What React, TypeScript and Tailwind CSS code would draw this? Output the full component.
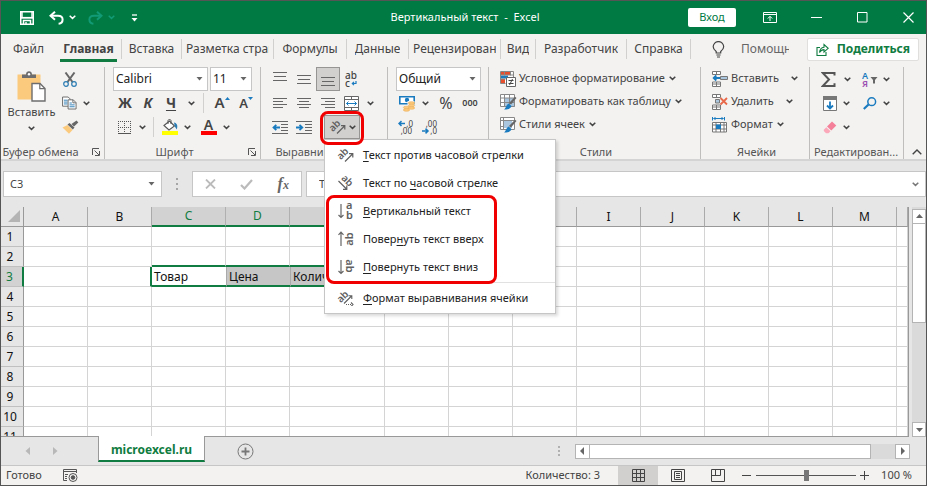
import React, { useState } from "react";

interface IconProps {
  className?: string;
}

const Chevron: React.FC<IconProps> = ({ className = "text-[#444]" }) => (
  <svg width="7" height="5" viewBox="0 0 7 5" fill="none" stroke="currentColor" strokeWidth="1.5" className={`shrink-0 ${className}`}>
    <path d="M0.7 0.8L3.5 3.4L6.3 0.8" />
  </svg>
);

const Caret: React.FC<IconProps> = ({ className = "" }) => (
  <svg width="7" height="4" viewBox="0 0 7 4" fill="#666" className={`shrink-0 ${className}`}>
    <path d="M0.5 0h6L3.5 3.5z" />
  </svg>
);

const SaveIcon = () => (
  <svg width="14" height="14" viewBox="0 0 14 14" fill="none" stroke="#fff" strokeWidth="1.5">
    <path d="M0.75 0.75h12.5v12.5h-12.5z" />
    <path d="M0.75 6.8h12.5" strokeWidth="1.8" />
    <path d="M2 0.8v5.5M12 0.8v5.5" strokeWidth="1.4" />
    <path d="M3.5 13V9.6h7V13" />
    <path d="M6 11v2.5" strokeWidth="1.4" />
  </svg>
);

const UndoIcon: React.FC<IconProps> = ({ className = "" }) => (
  <svg width="15" height="14" viewBox="0 0 15 14" fill="none" stroke="currentColor" strokeWidth="2" className={className}>
    <path d="M6 0.8L1.5 4.8L6 8.8" />
    <path d="M2 4.8H9c2.8 0 4.6 1.5 4.6 3.8S11.8 12.6 9.6 12.8" />
  </svg>
);

const QuickAccessIcon = () => (
  <svg width="7" height="8" viewBox="0 0 7 8">
    <path d="M1 1h5" stroke="#fff" strokeWidth="1.3" />
    <path d="M0.5 4h6L3.5 7.5z" fill="#fff" />
  </svg>
);

const RibbonDisplayIcon = () => (
  <svg width="14" height="11" viewBox="0 0 14 11" fill="none" stroke="#fff">
    <path d="M0.5 0.5h13v10h-13zM0.5 2.5h13" />
    <path d="M7 9V4.5M4.8 6.5L7 4.3L9.2 6.5" />
  </svg>
);

const BulbIcon = () => (
  <svg width="13" height="17" viewBox="0 0 13 17" fill="none" stroke="#444" strokeWidth="1.2">
    <path d="M4.2 12V10.5C2.6 9.3 1.2 8 1.2 5.8a5.2 5.2 0 0 1 10.5 0c0 2.2-1.5 3.5-3 4.7V12zM4.4 14h4.2M5 16h3" />
  </svg>
);

const ShareIcon = () => (
  <svg width="13" height="13" viewBox="0 0 13 13" fill="none" stroke="#107c41" strokeWidth="1.1">
    <path d="M4 4.5H1v8h9V9" />
    <path d="M3.5 9.5C3.8 6 5.5 4.4 8 4.2V1.5L12.2 5.3L8 9V6.6C6 6.6 4.6 7.5 3.5 9.5z" />
  </svg>
);

const PasteIcon = () => (
  <svg width="29" height="31" viewBox="0 0 29 31">
    <path d="M0.5 3.5h23v25h-23z" fill="#fcca7c" />
    <path d="M5 7V3.5h4C9 1.5 10.3 0.3 12 0.3S15 1.5 15 3.5h4V7z" fill="#6d6d6d" />
    <circle cx="12" cy="3.2" r="1.2" fill="#fff" />
    <path d="M15 12.5h8l5 5v12.5h-13z" fill="#fff" stroke="#6d6d6d" strokeWidth="1.4" />
    <path d="M22.8 12.5v5.2H28" fill="none" stroke="#6d6d6d" strokeWidth="1.2" />
  </svg>
);

const CutIcon = () => (
  <svg width="14" height="15" viewBox="0 0 14 15" fill="none">
    <path d="M2.5 0.5L9.5 10M11.5 0.5L4.5 10" stroke="#666" strokeWidth="2" />
    <circle cx="3" cy="12" r="2.3" stroke="#2b7cb3" strokeWidth="1.2" />
    <circle cx="11" cy="12" r="2.3" stroke="#2b7cb3" strokeWidth="1.2" />
  </svg>
);

const CopyIcon = () => (
  <svg width="16" height="14" viewBox="0 0 16 14" fill="#fff">
    <path d="M0.6 0.6h6l2 2v7.8h-8z" stroke="#666" />
    <path d="M2 4h4M2 6h4M2 8h4" stroke="#2b7cb3" />
    <path d="M6.5 3.6h5.5l3 3v6.8h-8.5z" stroke="#666" />
    <path d="M11.6 3.6v3.2h3.2" stroke="#666" fill="none" />
    <path d="M8 7h2.5M8 9h5.5M8 11h5.5" stroke="#2b7cb3" />
  </svg>
);

const BrushIcon = () => (
  <svg width="17" height="14" viewBox="0 0 17 14">
    <path d="M0.5 7.5L5.5 5L10.5 10L7 13.8z" fill="#fcca7c" />
    <path d="M5.5 4.5L7.5 3L12.5 7.5L10.8 9.6z" fill="#666" />
    <path d="M9.5 4L14.5 0.5L16.3 2.5L12 6.5z" fill="#666" />
  </svg>
);

const BordersIcon = () => (
  <svg width="13" height="13" viewBox="0 0 13 13" shapeRendering="crispEdges" fill="none" stroke="#555">
    <path d="M0 0.5h13M0 6.5h13M0.5 0v12M6.5 0v12M12.5 0v12" strokeDasharray="1 1" />
    <path d="M0 12.5h13" />
  </svg>
);

const FillIcon = () => (
  <svg width="16" height="16" viewBox="0 0 16 16">
    <path d="M2 6.5L7.5 2L12.5 7L7 11z" fill="#fff" stroke="#555" strokeWidth="1.1" />
    <path d="M6 5V1.5a1.6 1.6 0 0 1 3 0V5" fill="none" stroke="#555" />
    <path d="M12 3.5c3 .5 4 3 2.8 7l-2-3z" fill="#2b7cb3" />
    <path d="M0 12h16v4H0z" fill="#ff0" />
  </svg>
);

interface LinesProps {
  rows: [number, number, number][];
}

// каждая строка: x, y, ширина
const Lines: React.FC<LinesProps> = ({ rows }) => (
  <svg width="14" height="14" viewBox="0 0 14 14" shapeRendering="crispEdges" fill="#666">
    {rows.map(([x, y, w], i) => (
      <rect key={i} x={x} y={y} width={w} height="1" />
    ))}
  </svg>
);

const WrapIcon = () => (
  <svg width="14" height="17" viewBox="0 0 14 17" stroke="none">
    <text x="0" y="8" fontSize="10" fontWeight="500" fill="#444">ab</text>
    <text x="0" y="16" fontSize="10" fontWeight="500" fill="#444">c</text>
    <path d="M11 10v2.5H7.5M9 10.8L7.3 12.5L9 14.2" fill="none" stroke="#1b7bbf" strokeWidth="1.2" />
  </svg>
);

const MergeIcon = () => (
  <svg width="15" height="15" viewBox="0 0 15 15" fill="#fff" stroke="#666">
    <path d="M0.5 0.5h14v14h-14z" />
    <path d="M0.5 3.5h14M0.5 11.5h14M7.5 0.5v3M7.5 11.5v3" />
    <path d="M2.5 7.5h10M4.5 5.5l-2 2l2 2M10.5 5.5l2 2l-2 2" stroke="#1b7bbf" fill="none" />
  </svg>
);

const IndentIcon: React.FC<{ right?: boolean }> = ({ right }) => (
  <svg width="16" height="13" viewBox="0 0 16 13" fill="none">
    <path d="M0 0.5h16M9 3.5h7M9 6.5h7M9 9.5h7M0 12.5h16" stroke="#666" shapeRendering="crispEdges" />
    <path d={right ? "M0 6.5h6M3.5 3.8L6.3 6.5L3.5 9.2" : "M8 6.5H1.5M4.3 3.8L1.5 6.5L4.3 9.2"} stroke="#1b7bbf" strokeWidth="1.8" />
  </svg>
);

const AbText: React.FC<{ x: number; y: number; angle: number; size?: number }> = ({ x, y, angle, size = 10 }) => (
  <text x={x} y={y} fontSize={size} fontWeight="600" fill="#606060" textAnchor="middle" transform={`rotate(${angle} ${x} ${y})`}>
    ab
  </text>
);

const AngleUpIcon = () => (
  <svg width="18" height="16" viewBox="0 0 18 16" fill="none" stroke="#606060" strokeWidth="1.2">
    <g stroke="none"><AbText x={8} y={9} angle={-45} /></g>
    <path d="M8 14.5L15.5 7M12 6.7h3.8v3.8" />
  </svg>
);

const AngleDownIcon = () => (
  <svg width="18" height="16" viewBox="0 0 18 16" fill="none" stroke="#606060" strokeWidth="1.2">
    <g stroke="none"><AbText x={8} y={8} angle={45} /></g>
    <path d="M1.5 6L9.5 14M9.8 10.5v3.8H6" />
  </svg>
);

const VerticalIcon = () => (
  <svg width="18" height="18" viewBox="0 0 18 18" fill="none" stroke="#666" strokeWidth="1.2">
    <path d="M4 2v13.5M1.5 13L4 15.5L6.5 13" />
    <g stroke="none" fill="#606060" fontSize="11" fontWeight="600">
      <text x="9" y="7">a</text>
      <text x="9" y="17">b</text>
    </g>
  </svg>
);

const RotateUpIcon = () => (
  <svg width="18" height="18" viewBox="0 0 18 18" fill="none" stroke="#666" strokeWidth="1.2">
    <path d="M4 16V2M1.5 4.8L4 2.2L6.5 4.8" />
    <g stroke="none"><AbText x={16} y={9} angle={-90} size={11} /></g>
  </svg>
);

const RotateDownIcon = () => (
  <svg width="18" height="18" viewBox="0 0 18 18" fill="none" stroke="#666" strokeWidth="1.2">
    <path d="M4 2v13.5M1.5 13L4 15.5L6.5 13" />
    <g stroke="none"><AbText x={9} y={8} angle={90} size={11} /></g>
  </svg>
);

const AlignFormatIcon = () => (
  <svg width="18" height="16" viewBox="0 0 18 16" fill="none" stroke="#606060" strokeWidth="1.1">
    <g stroke="none"><AbText x={8} y={9} angle={-45} /></g>
    <path d="M7 13.5L14.5 6M11.5 5.8h3.3v3.3" />
    <path d="M9 14.5h6" strokeDasharray="1 1" />
    <path d="M14 12.5l2 2l-2 2" />
  </svg>
);

const MoneyIcon = () => (
  <svg width="17" height="17" viewBox="0 0 17 17">
    <path d="M0.8 1.8h14.4v7H0.8z" fill="#fff" stroke="#1b7bbf" strokeWidth="1.6" />
    <circle cx="8" cy="5" r="2.2" fill="#1b7bbf" />
    <path d="M8.5 6h7v8h-7z" fill="#f3f2f1" />
    <g fill="#fcca7c" stroke="#e9a850" strokeWidth="0.5">
      <ellipse cx="12.5" cy="8" rx="3.2" ry="1.3" />
      <ellipse cx="12.5" cy="10.5" rx="3.2" ry="1.3" />
      <ellipse cx="7.5" cy="12.5" rx="3.2" ry="1.3" />
      <ellipse cx="12.5" cy="13" rx="3.2" ry="1.3" />
      <ellipse cx="7.5" cy="15" rx="3.2" ry="1.3" />
    </g>
  </svg>
);

const DecimalIcon: React.FC<{ less?: boolean }> = ({ less }) => (
  <svg width="16" height="15" viewBox="0 0 16 15" fill="#444" fontSize="8">
    <text x="15" y="7" textAnchor="end">{less ? ",00" : ",0"}</text>
    <text x={less ? 15 : 14} y="14" textAnchor="end">{less ? ",0" : ",00"}</text>
    <path
      d={less ? "M0 11h6M3.5 8.6L6 11L3.5 13.4" : "M7 3.5H1M3.5 1.1L1 3.5L3.5 5.9"}
      fill="none"
      stroke="#1b7bbf"
      strokeWidth="1.5"
    />
  </svg>
);

const ConditionalIcon = () => (
  <svg width="16" height="16" viewBox="0 0 16 16" fill="none">
    <path d="M0.5 0.5h12v11h-12z" fill="#fff" />
    <path d="M1 1h3v3H1zM5 1h5v3H5zM1 8h4v4H1z" fill="#e8502d" />
    <path d="M1 4.5h7v3H1z" fill="#1b7bbf" />
    <path d="M0.5 0.5h13v6M0.5 0.5v12h5M4.5 0.5v4M10.5 0.5v4M0.5 4h13M0.5 8h5" stroke="#888" />
    <path d="M6.5 6.5h9v9h-9z" fill="#fff" stroke="#666" />
    <path d="M8.5 9.5h5M8.5 12.5h5M12.5 8l-3 6" stroke="#444" />
  </svg>
);

const TableStyleIcon: React.FC<{ cells?: boolean }> = ({ cells }) => (
  <svg width="17" height="16" viewBox="0 0 17 16" fill="none">
    <path d="M0.5 0.5h14v12h-14z" fill="#fff" />
    <path d={cells ? "M4 4h8v7H4z" : "M5 4h10v9H5z"} fill="#a9c6de" />
    <path
      d={cells ? "M0.5 0.5h14v12h-14zM3.5 0.5v12M0.5 3.5h14M0.5 9.5h3" : "M0.5 0.5h14v12h-14zM4.5 0.5v12M9.5 0.5v12M0.5 4h14M0.5 8.5h14"}
      stroke="#888"
    />
    <path d="M16.5 4L11 10.5L9 9L15 2.8z" fill="#666" />
    <path d="M8.5 9.5L11.5 12C10.5 15 7.5 15.6 4 15.5c2-1 2-4.5 4.5-6z" fill="#1b7bbf" />
  </svg>
);

const InsertCellsIcon = () => (
  <svg width="16" height="16" viewBox="0 0 16 16" fill="#fff" stroke="#777">
    <path d="M0.5 0.5h8v3h-8zM4.5 0.5v3M0.5 11h8v4.5h-8zM4.5 11v4.5M0.5 13h8" />
    <path d="M8.5 5.5h7v3h-7z" fill="#a9c6de" />
    <path d="M8 7H1.5M4.3 4.5L1.7 7L4.3 9.5" stroke="#1b7bbf" strokeWidth="1.8" fill="none" />
  </svg>
);

const DeleteCellsIcon = () => (
  <svg width="16" height="16" viewBox="0 0 16 16" fill="#fff" stroke="#777">
    <path d="M0.5 0.5h8v3h-8zM4.5 0.5v3M0.5 11h8v4.5h-8zM4.5 11v4.5M0.5 13h8" />
    <path d="M3.5 5.5h4v3.5h-4z" fill="#a9c6de" />
    <path d="M8.5 4L15 10.5M15 4L8.5 10.5" stroke="#e8694a" strokeWidth="1.8" />
  </svg>
);

const FormatCellsIcon = () => (
  <svg width="16" height="16" viewBox="0 0 16 16" fill="none">
    <path d="M0.5 0v3.5M12.5 0v3.5M1.5 1.5h10M3.5 0L2 1.5L3.5 3M9.5 0L11 1.5L9.5 3" stroke="#1b7bbf" />
    <path d="M0.5 5.5h14v9.5h-14z" fill="#fff" stroke="#777" />
    <path d="M4 5.5v9.5M8.5 5.5v9.5M12 5.5v9.5M0.5 8h14M0.5 12h14" stroke="#777" />
    <path d="M4 7.5h5v4.5H4z" fill="#1b7bbf" />
  </svg>
);

const SumIcon = () => (
  <svg width="15" height="15" viewBox="0 0 15 15" fill="none" stroke="#555" strokeWidth="2">
    <path d="M13.5 3.5V1H1.8L8 7.5L1.8 14H13.5V11.3" />
  </svg>
);

const SortIcon = () => (
  <svg width="17" height="17" viewBox="0 0 17 17" fontWeight="600" fontSize="9">
    <text x="0" y="8" fill="#1b7bbf">А</text>
    <text x="0" y="16" fill="#9b4fb0">Я</text>
    <path d="M8.5 6h7l-2.5 3v3.5h-2V9z" fill="#666" />
  </svg>
);

const FillDownIcon = () => (
  <svg width="14" height="15" viewBox="0 0 14 15">
    <path d="M0.5 0.5h13v14h-13z" fill="#fff" stroke="#777" />
    <path d="M0 0h14v4H0z" fill="#777" />
    <path d="M7 5.5v7M4 9.5l3 3l3-3" fill="none" stroke="#1b7bbf" strokeWidth="1.8" />
  </svg>
);

const FindIcon = () => (
  <svg width="14" height="13" viewBox="0 0 14 13" fill="none" stroke="#1b7bbf">
    <circle cx="8.7" cy="4.7" r="3.9" strokeWidth="1.5" />
    <path d="M5.5 7.5L0.8 12" strokeWidth="2.2" />
  </svg>
);

const EraserIcon = () => (
  <svg width="14" height="13" viewBox="0 0 14 13">
    <path d="M9 0.5L13.3 4.5L8.3 9.5L4 5.5z" fill="#f4809a" />
    <path d="M3.3 6.2L7.5 10.2L5.5 12.3H3L0.8 10V8.7z" fill="#fba9ba" />
  </svg>
);

const LauncherIcon = () => (
  <svg width="8" height="8" viewBox="0 0 8 8" fill="none" stroke="#555">
    <path d="M0.5 7V0.5H7M2.5 2.5L7 7M7.5 3v4.5H3" />
  </svg>
);

interface ToolProps {
  label: string;
  className?: string;
  children: React.ReactNode;
}

const Tool: React.FC<ToolProps> = ({ label, className = "w-6", children }) => (
  <button type="button" aria-label={label} className={`flex h-6 shrink-0 items-center justify-center ${className}`}>
    {children}
  </button>
);

interface GroupProps {
  title: string;
  className: string;
  launcher?: boolean;
  children: React.ReactNode;
}

const Group: React.FC<GroupProps> = ({ title, className, launcher, children }) => (
  <section className={`flex shrink-0 flex-col border-r border-[#c0bebc] ${className}`}>
    <div className="h-[72px] shrink-0">{children}</div>
    <div className="mt-1 flex h-4 shrink-0 items-center pt-0.5 text-[11px] leading-4 text-[#555]">
      <span className={`flex-1 text-center whitespace-nowrap ${launcher ? "pr-3" : "pr-2"}`}>{title}</span>
      {launcher && (
        <button type="button" aria-label={`Параметры: ${title}`} className="pr-1">
          <LauncherIcon />
        </button>
      )}
    </div>
  </section>
);

interface SelectBoxProps {
  label: string;
  value: string;
  className: string;
}

const SelectBox: React.FC<SelectBoxProps> = ({ label, value, className }) => (
  <div className={`relative h-6 shrink-0 border border-[#c6c6c6] bg-white ${className}`}>
    <select aria-label={label} className="h-full w-full appearance-none px-0.5 text-xs text-[#222] outline-none">
      <option>{value}</option>
    </select>
    <Caret className="pointer-events-none absolute top-[9px] right-1" />
  </div>
);

const Divider = () => <span className="h-5 w-px shrink-0 bg-[#d2d0ce]" />;

const tabs = [
  { name: "Файл", className: "w-[55px]" },
  { name: "Главная", className: "w-[66px] border-r", active: true },
  { name: "Вставка", className: "w-[60px] border-r" },
  { name: "Разметка страницы", className: "w-[92px] border-r" },
  { name: "Формулы", className: "w-[73px] border-r" },
  { name: "Данные", className: "w-[62px] border-r" },
  { name: "Рецензирование", className: "w-[92px] border-r" },
  { name: "Вид", className: "w-[35px] border-r" },
  { name: "Разработчик", className: "w-[91px] border-r" },
  { name: "Справка", className: "w-[64px] border-r" },
];

interface MenuEntry {
  before: string;
  key: string;
  after: string;
  icon: React.ReactNode;
}

const plainEntries: MenuEntry[] = [
  { before: "", key: "Т", after: "екст против часовой стрелки", icon: <AngleUpIcon /> },
  { before: "Текст по ", key: "ч", after: "асовой стрелке", icon: <AngleDownIcon /> },
];

const markedEntries: MenuEntry[] = [
  { before: "", key: "В", after: "ертикальный текст", icon: <VerticalIcon /> },
  { before: "Повер", key: "н", after: "уть текст вверх", icon: <RotateUpIcon /> },
  { before: "", key: "П", after: "овернуть текст вниз", icon: <RotateDownIcon /> },
];

const formatEntry: MenuEntry = { before: "", key: "Ф", after: "ормат выравнивания ячейки", icon: <AlignFormatIcon /> };

const MenuItem: React.FC<{ entry: MenuEntry }> = ({ entry }) => (
  <button type="button" role="menuitem" className="flex h-7 w-full items-center pl-3 text-left text-[11px] whitespace-nowrap text-[#222]">
    <span className="w-[26px] shrink-0">{entry.icon}</span>
    <span>
      {entry.before}
      <span className="underline underline-offset-2">{entry.key}</span>
      {entry.after}
    </span>
  </button>
);

const OrientationMenu = () => (
  <div role="menu" className="absolute top-full left-0 z-10 w-[232px] border border-[#c6c6c6] bg-white py-px shadow-[2px_2px_3px_rgba(0,0,0,0.15)]">
    {plainEntries.map((entry) => (
      <MenuItem key={entry.after} entry={entry} />
    ))}
    <div className="relative">
      {markedEntries.map((entry) => (
        <MenuItem key={entry.after} entry={entry} />
      ))}
      <span className="pointer-events-none absolute -top-0.5 -bottom-[3px] left-px w-[171px] rounded-lg border-3 border-[#f00000]" />
    </div>
    <div className="my-px ml-9 border-t border-[#e1e1e1]" />
    <MenuItem entry={formatEntry} />
  </div>
);

const TitleBar = () => (
  <header className="flex h-[33px] shrink-0 items-center bg-[#007a43] text-[11px] text-white">
    <div className="flex flex-1 items-center pl-[19px]">
      <button type="button" aria-label="Сохранить" className="mr-[15px]"><SaveIcon /></button>
      <button type="button" aria-label="Отменить" className="flex items-center gap-[5px]">
        <UndoIcon /><Chevron className="text-white" />
      </button>
      <button type="button" aria-label="Вернуть" className="ml-3 flex items-center gap-[5px] text-[#119a75]">
        <UndoIcon className="-scale-x-100" /><Chevron className="text-[#119a75]" />
      </button>
      <button type="button" aria-label="Настройка панели" className="ml-4"><QuickAccessIcon /></button>
    </div>
    <h1 className="mr-2 whitespace-pre">Вертикальный текст  -  Excel</h1>
    <div className="flex flex-1 items-center justify-end gap-[26px] pr-2">
      <button type="button" className="-mr-0.5 h-[19px] w-12 rounded-xs bg-white text-[#007a43]">Вход</button>
      <button type="button" aria-label="Параметры ленты" className="flex w-5 justify-center"><RibbonDisplayIcon /></button>
      <button type="button" aria-label="Свернуть" className="flex w-5 justify-center">
        <svg width="11" height="11" viewBox="0 0 11 11" stroke="#fff"><path d="M0 5.5h11" /></svg>
      </button>
      <button type="button" aria-label="Развернуть" className="flex w-5 justify-center">
        <svg width="11" height="11" viewBox="0 0 11 11" stroke="#fff" fill="none"><path d="M0.5 0.5h9.5v9.5h-9.5z" /></svg>
      </button>
      <button type="button" aria-label="Закрыть" className="flex w-5 justify-center">
        <svg width="11" height="11" viewBox="0 0 11 11" stroke="#fff" strokeWidth="1.2"><path d="M0.5 0.5l10 10M10.5 0.5l-10 10" /></svg>
      </button>
    </div>
  </header>
);

const TabStrip = () => (
  <nav className="flex h-7 shrink-0 items-center bg-[#f3f2f1] pt-0.5 text-xs text-[#444]">
    {tabs.map((tab) => (
      <button
        key={tab.name}
        type="button"
        className={`flex h-5 shrink-0 items-center border-[#d2d0ce] px-1 ${tab.className}`}
      >
        <span
          className={
            tab.active
              ? "h-5 flex-1 leading-5 font-bold shadow-[0_3px_0_#107c41]"
              : "mx-auto overflow-hidden whitespace-nowrap"
          }
        >
          {tab.name}
        </span>
      </button>
    ))}
    <label htmlFor="assistant" aria-label="Помощник" className="ml-[21px]"><BulbIcon /></label>
    <input id="assistant" placeholder="Помощник" className="ml-4 w-12 outline-none placeholder:text-[#666]" />
    <span className="flex-1" />
    <button type="button" className="mr-[7px] flex h-[23px] items-center gap-2 rounded-xs border border-[#e1dfdd] bg-white px-2 font-bold text-[#107c41]">
      <ShareIcon />
      Поделиться
    </button>
  </nav>
);

const Ribbon = () => (
  <div className="flex h-[99px] shrink-0 border-b-2 border-[#d4d4d4] bg-[#f3f2f1] pt-[5px] text-[11px] text-[#444]">
    <Group title="Буфер обмена" className="w-[104px]" launcher>
      <div className="flex">
        <button type="button" className="flex w-[61px] flex-col items-center pt-1">
          <PasteIcon />
          <span className="leading-5">Вставить</span>
          <Chevron className="mt-1 text-[#444]" />
        </button>
        <div>
          <Tool label="Вырезать" className="w-4"><CutIcon /></Tool>
          <Tool label="Копировать" className="w-7 gap-1.5"><CopyIcon /><Chevron /></Tool>
          <Tool label="Формат по образцу" className="w-[17px]"><BrushIcon /></Tool>
        </div>
      </div>
    </Group>

    <Group title="Шрифт" className="w-[156px] pl-2" launcher>
      <div className="flex gap-0.5">
        <SelectBox label="Шрифт" value="Calibri" className="w-[95px]" />
        <SelectBox label="Размер" value="11" className="w-[42px]" />
      </div>
      <div className="flex items-center text-sm font-bold">
        <Tool label="Полужирный">Ж</Tool>
        <Tool label="Курсив" className="w-[22px]"><i>К</i></Tool>
        <Tool label="Подчёркнутый"><u className="underline-offset-2">Ч</u></Tool>
        <Tool label="Вид подчёркивания" className="w-4"><Chevron /></Tool>
        <span className="w-1" />
        <Divider />
        <Tool label="Увеличить размер" className="w-8 pl-1 text-[15px] font-semibold">
          A<svg width="5" height="12" viewBox="0 0 5 12" fill="#1b7bbf"><path d="M0 3h5L2.5 0z" /></svg>
        </Tool>
        <Tool label="Уменьшить размер" className="w-5 text-[13px] font-semibold">
          A<svg width="5" height="12" viewBox="0 0 5 12" fill="#1b7bbf"><path d="M0 0h5L2.5 3z" /></svg>
        </Tool>
      </div>
      <div className="flex items-center">
        <Tool label="Границы" className="w-[38px] gap-2"><BordersIcon /><Chevron /></Tool>
        <span className="w-0.5" />
        <Divider />
        <span className="w-1" />
        <Tool label="Заливка" className="w-9 gap-1.5"><FillIcon /><Chevron /></Tool>
        <Tool label="Цвет текста" className="w-[42px] gap-1.5">
          <span className="flex w-4 flex-col items-center border-b-4 border-[#f00] text-sm leading-3 font-semibold">A</span>
          <Chevron />
        </Tool>
      </div>
    </Group>

    <Group title="Выравнивание" className="w-[127px] pl-[7px]" launcher>
      <div className="flex">
        <Tool label="По верхнему краю"><Lines rows={[[0, 0, 14], [1, 4, 12], [0, 8, 14]]} /></Tool>
        <Tool label="По середине"><Lines rows={[[0, 3, 14], [1, 7, 12], [0, 11, 14]]} /></Tool>
        <Tool label="По нижнему краю" className="w-6 border border-[#979593] bg-[#d2d0ce]"><Lines rows={[[0, 5, 14], [1, 9, 12], [0, 13, 14]]} /></Tool>
        <Tool label="Перенести текст"><WrapIcon /></Tool>
      </div>
      <div className="flex">
        <Tool label="По левому краю"><Lines rows={[[0, 2, 14], [0, 5, 10], [0, 8, 14], [0, 11, 10]]} /></Tool>
        <Tool label="По центру"><Lines rows={[[0, 2, 14], [2, 5, 10], [0, 8, 14], [2, 11, 10]]} /></Tool>
        <Tool label="По правому краю"><Lines rows={[[0, 2, 14], [4, 5, 10], [0, 8, 14], [4, 11, 10]]} /></Tool>
        <Tool label="Объединить" className="w-[38px] gap-2"><MergeIcon /><Chevron /></Tool>
      </div>
      <div className="flex">
        <Tool label="Уменьшить отступ"><IndentIcon /></Tool>
        <Tool label="Увеличить отступ"><IndentIcon right /></Tool>
        <div className="relative ml-2">
          <Tool label="Ориентация" className="w-9 gap-0.5 border border-[#979593] bg-[#d2d0ce]"><AngleUpIcon /><Chevron /></Tool>
          <OrientationMenu />
          <span className="pointer-events-none absolute -inset-x-1 -top-1 -bottom-1.5 z-20 rounded-lg border-3 border-[#f00000]" />
        </div>
      </div>
    </Group>

    <Group title="Число" className="w-[101px] pl-2" launcher>
      <SelectBox label="Числовой формат" value="Общий" className="w-[85px]" />
      <div className="flex">
        <Tool label="Денежный формат" className="w-9 gap-1.5"><MoneyIcon /><Chevron /></Tool>
        <Tool label="Процентный формат" className="w-7 text-base">%</Tool>
        <Tool label="Формат с разделителями" className="w-5 text-[9px] font-semibold">000</Tool>
      </div>
      <div className="flex">
        <Tool label="Увеличить разрядность" className="w-5"><DecimalIcon /></Tool>
        <Tool label="Уменьшить разрядность" className="ml-1 w-5"><DecimalIcon less /></Tool>
      </div>
    </Group>

    <Group title="Стили" className="w-[212px] pl-[11px]">
      {[
        { name: "Условное форматирование", icon: <ConditionalIcon /> },
        { name: "Форматировать как таблицу", icon: <TableStyleIcon /> },
        { name: "Стили ячеек", icon: <TableStyleIcon cells /> },
      ].map((item) => (
        <button key={item.name} type="button" className="flex h-[23px] items-center whitespace-nowrap">
          <span className="w-[19px]">{item.icon}</span>
          {item.name}
          <Chevron className="ml-1 text-[#444]" />
        </button>
      ))}
    </Group>

    <Group title="Ячейки" className="w-[109px] pl-[11px]">
      {[
        { name: "Вставить", icon: <InsertCellsIcon />, chevron: "ml-3 text-[#444]" },
        { name: "Удалить", icon: <DeleteCellsIcon />, chevron: "ml-3 text-[#444]" },
        { name: "Формат", icon: <FormatCellsIcon />, chevron: "ml-1 text-[#444]" },
      ].map((item) => (
        <button key={item.name} type="button" className="flex h-[23px] items-center whitespace-nowrap">
          <span className="w-[19px]">{item.icon}</span>
          {item.name}
          <Chevron className={item.chevron} />
        </button>
      ))}
    </Group>

    <Group title="Редактирован..." className="w-[94px] pl-1">
      <div className="grid grid-cols-[40px_36px] pl-1">
        <Tool label="Сумма" className="w-9 gap-2"><SumIcon /><Chevron /></Tool>
        <Tool label="Сортировка и фильтр" className="w-9 gap-1"><SortIcon /><Chevron /></Tool>
        <Tool label="Заполнить" className="w-9 gap-1.5"><FillDownIcon /><Chevron /></Tool>
        <Tool label="Найти и выделить" className="w-9 gap-1.5"><FindIcon /><Chevron /></Tool>
        <Tool label="Очистить" className="w-9 gap-1.5"><EraserIcon /><Chevron /></Tool>
      </div>
    </Group>

    <button type="button" aria-label="Свернуть ленту" className="ml-auto flex items-end pr-1 pb-1">
      <svg width="10" height="6" viewBox="0 0 10 6" fill="none" stroke="#444" strokeWidth="1.4"><path d="M0.7 5.3L5 1L9.3 5.3" /></svg>
    </button>
  </div>
);

const FormulaBar = () => (
  <div className="flex h-[46px] shrink-0 items-center bg-[#e6e6e6] pl-0.5 text-[11px] text-[#444]">
    <label className="flex h-[26px] w-[159px] shrink-0 items-center border border-[#c6c6c6] bg-white pr-1.5">
      <input aria-label="Имя ячейки" defaultValue="C3" className="min-w-0 flex-1 pl-1.5 outline-none" />
      <Caret />
    </label>
    <svg width="30" height="12" viewBox="0 0 30 12" fill="#a6a6a6" className="shrink-0">
      <path d="M14 0h2v2h-2zM14 5h2v2h-2zM14 10h2v2h-2z" />
    </svg>
    <div className="flex h-[26px] w-[110px] shrink-0 items-center justify-around border border-[#c6c6c6] bg-white">
      <button type="button" aria-label="Отмена">
        <svg width="11" height="10" viewBox="0 0 11 10" stroke="#bbb" strokeWidth="1.8"><path d="M1 0.5l9 9M10 0.5l-9 9" /></svg>
      </button>
      <button type="button" aria-label="Ввод">
        <svg width="13" height="11" viewBox="0 0 13 11" fill="none" stroke="#bbb" strokeWidth="2.2"><path d="M1 6l3.5 3.5L12 1" /></svg>
      </button>
      <button type="button" aria-label="Вставить функцию" className="font-['Liberation_Serif',serif] text-base leading-4 font-bold text-[#666] italic">
        f<span className="text-xs">x</span>
      </button>
    </div>
    <label className="ml-1 flex h-[26px] flex-1 items-center border border-[#c6c6c6] bg-white pr-1.5">
      <input aria-label="Строка формул" defaultValue="Товар" className="min-w-0 flex-1 pl-3 outline-none" />
      <Chevron className="text-[#777]" />
    </label>
  </div>
);

const columns = [
  { name: "A", className: "w-16" },
  { name: "B", className: "w-16" },
  { name: "C", className: "w-[74px]", selected: true },
  { name: "D", className: "w-16", selected: true },
  { name: "E", className: "w-[95px]", selected: true },
  { name: "F", className: "w-16" },
  { name: "G", className: "w-16" },
  { name: "H", className: "w-16" },
  { name: "I", className: "w-16" },
  { name: "J", className: "w-16" },
  { name: "K", className: "w-16" },
  { name: "L", className: "w-16" },
  { name: "M", className: "w-16" },
  { name: "", className: "" },
];

const rowNumbers = [1, 2, 3, 4, 5, 6, 7, 8, 9, 10, 11];

const cellText: Record<string, string> = { C3: "Товар", D3: "Цена", E3: "Количество" };

const cellStyle = (column: string, row: number) => {
  if (row === 2 && cellText[column + 3]) return "border-r border-b-2 border-r-[#d4d4d4] border-b-[#107c41]";
  if (row === 3 && column === "B") return "border-r-2 border-b border-r-[#107c41] border-b-[#d4d4d4]";
  if (!cellText[column + row]) return "border-r border-b border-[#d4d4d4]";
  if (column === "C") return "border-b-2 border-b-[#107c41] bg-white";
  return "border-b-2 border-l border-b-[#107c41] border-l-[#aaa] bg-[#c6c6c6]";
};

const ScrollButton: React.FC<{ label: string; path: string; className: string }> = ({ label, path, className }) => (
  <button type="button" aria-label={label} className={`flex shrink-0 items-center justify-center border border-[#b4b4b4] bg-white ${className}`}>
    <svg width="9" height="8" viewBox="0 0 9 8" fill="#666"><path d={path} /></svg>
  </button>
);

const Sheet = () => (
  <div className="flex min-h-0 flex-1 bg-[#e6e6e6]">
    <div className="min-w-0 flex-1 overflow-hidden border-r border-b border-[#999] bg-white">
      <table className="w-full table-fixed border-separate border-spacing-0 text-xs text-[#111]">
        <thead>
          <tr className="h-5">
            <th scope="col" className="h-5 w-[23px] border-r border-b border-[#999] bg-[#e6e6e6] p-0">
              <svg width="13" height="13" viewBox="0 0 13 13" fill="#b4b4b4" className="ml-1.5"><path d="M13 0v12H1z" /></svg>
            </th>
            {columns.map((column) => (
              <th
                key={column.name}
                scope="col"
                className={`h-5 border-r p-0 leading-4 font-normal ${column.className} ${
                  column.selected ? "border-b-2 border-r-[#b0b0b0] border-b-[#107c41] bg-[#d2d2d2] text-[#107c41]" : "border-b border-r-[#aaa] border-b-[#999] bg-[#e6e6e6]"
                }`}
              >
                {column.name}
              </th>
            ))}
          </tr>
        </thead>
        <tbody>
          {rowNumbers.map((row) => (
            <tr key={row}>
              <th
                scope="row"
                className={`h-5 p-0 pt-px pr-1 leading-4 font-normal ${
                  row === 3 ? "border-r-2 border-b border-r-[#107c41] border-b-[#c0c0c0] bg-[#d2d2d2] text-[#107c41]" : "border-r border-b border-r-[#999] border-b-[#c0c0c0] bg-[#e6e6e6]"
                }`}
              >
                {row}
              </th>
              {columns.map((column) => (
                <td key={column.name} className={`h-5 overflow-hidden p-0 pt-px pl-0.5 leading-4 ${cellStyle(column.name, row)}`}>
                  {cellText[column.name + row]}
                </td>
              ))}
            </tr>
          ))}
        </tbody>
      </table>
    </div>
    <div className="ml-[3px] flex w-[14px] shrink-0 flex-col bg-[#dadada] pt-0.5">
      <ScrollButton label="Вверх" path="M1 5h7L4.5 1z" className="h-[15px]" />
      <div className="h-[99px] border border-t-0 border-[#b4b4b4] bg-white" />
      <ScrollButton label="Вниз" path="M1 2h7L4.5 6z" className="mt-auto h-[15px]" />
    </div>
  </div>
);

const SheetTabs = () => (
  <div className="flex h-7 shrink-0 bg-[#e6e6e6]">
    <div className="flex w-[97px] shrink-0 items-center gap-[23px] pl-6">
      <svg width="5" height="8" viewBox="0 0 5 8" fill="#b8b8b8"><path d="M5 0v8L0.5 4z" /></svg>
      <svg width="5" height="8" viewBox="0 0 5 8" fill="#b8b8b8"><path d="M0 0v8L4.5 4z" /></svg>
    </div>
    <button type="button" className="-mt-px h-[26px] w-[107px] shrink-0 border-r border-b-2 border-l border-x-[#999] border-b-[#107c41] bg-white pt-1 text-xs font-bold text-[#107c41]">
      microexcel.ru
    </button>
    <button type="button" aria-label="Новый лист" className="ml-8">
      <svg width="17" height="17" viewBox="0 0 17 17" fill="none" stroke="#777"><circle cx="8.5" cy="8.5" r="7.5" /><path d="M8.5 4.5v8M4.5 8.5h8" strokeWidth="1.8" /></svg>
    </button>
    <span className="flex-1" />
    <div className="mr-4 flex w-[352px] items-center">
      <svg width="17" height="10" viewBox="0 0 17 10" fill="#b0b0b0"><path d="M0 0h2v2H0zM0 4h2v2H0zM0 8h2v2H0z" /></svg>
      <div className="flex h-[15px] flex-1 bg-[#dadada]">
        <ScrollButton label="Влево" path="M6 0v8L2 4z" className="w-[15px]" />
        <div className="w-[281px] border border-l-0 border-[#b4b4b4] bg-white" />
        <ScrollButton label="Вправо" path="M3 0v8L7 4z" className="ml-auto w-[15px]" />
      </div>
    </div>
  </div>
);

const StatusBar = () => {
  const [zoom, setZoom] = useState(100);

  return (
    <footer className="flex h-5 shrink-0 items-center border-t border-[#c6c6c6] bg-[#f3f2f1] text-[11px] text-[#444]">
      <span className="w-[62px] pl-[5px]">Готово</span>
      <button type="button" aria-label="Запись макроса">
        <svg width="15" height="13" viewBox="0 0 15 13" fill="none" stroke="#555"><path d="M4 11.5H0.5v-11h13V4M0.5 2.5h13M2 5.5h3M2 7.5h2M2 9.5h2" /><circle cx="10" cy="8.5" r="4" /><circle cx="10" cy="8.5" r="1.8" fill="#555" /></svg>
      </button>
      <span className="flex-1" />
      <span className="mr-[18px]">Количество: 3</span>
      <button type="button" aria-label="Обычный" className="flex h-full w-10 items-center justify-center bg-[#d2d0ce]">
        <svg width="13" height="13" viewBox="0 0 13 13" fill="none" stroke="#444"><path d="M0.5 0.5h12v12h-12zM4.5 0.5v12M8.5 0.5v12M0.5 4.5h12M0.5 8.5h12" /></svg>
      </button>
      <button type="button" aria-label="Разметка страницы" className="flex h-full w-10 items-center justify-center">
        <svg width="14" height="13" viewBox="0 0 14 13" fill="none" stroke="#444"><path d="M0.5 0.5h13v12h-13zM3.5 2.5h7v8h-7zM5 4.5h4M5 6.5h4M5 8.5h4" /></svg>
      </button>
      <button type="button" aria-label="Страничный режим" className="flex h-full w-10 items-center justify-center">
        <svg width="14" height="13" viewBox="0 0 14 13" fill="none" stroke="#444"><path d="M0.5 0.5h13v12h-13zM4.5 0.5v6M9.5 0.5v6M0.5 6.5h9" /></svg>
      </button>
      <button type="button" aria-label="Уменьшить" className="ml-1 w-3">
        <svg width="9" height="9" viewBox="0 0 9 9" stroke="#444"><path d="M0 4.5h9" /></svg>
      </button>
      <input
        type="range"
        aria-label="Масштаб"
        min={10}
        max={190}
        value={zoom}
        onChange={(e) => setZoom(parseInt(e.target.value))}
        className="mx-0.5 h-3 w-[100px] appearance-none bg-[linear-gradient(#555,#555)] bg-[length:100%_1px] bg-center bg-no-repeat [&::-webkit-slider-thumb]:h-[11px] [&::-webkit-slider-thumb]:w-[5px] [&::-webkit-slider-thumb]:appearance-none [&::-webkit-slider-thumb]:bg-[#777]"
      />
      <button type="button" aria-label="Увеличить" className="ml-0.5 w-5">
        <svg width="9" height="9" viewBox="0 0 9 9" stroke="#444"><path d="M0 4.5h9M4.5 0v9" /></svg>
      </button>
      <span className="mr-3.5 w-8 text-right whitespace-nowrap">{zoom} %</span>
    </footer>
  );
};

const App: React.FC = () => (
  <div className="flex h-screen min-h-[420px] flex-col overflow-hidden border border-[#555] bg-[#e6e6e6] font-['Noto_Sans','Open_Sans',sans-serif]">
    <TitleBar />
    <TabStrip />
    <Ribbon />
    <FormulaBar />
    <Sheet />
    <SheetTabs />
    <StatusBar />
  </div>
);

export default App;
